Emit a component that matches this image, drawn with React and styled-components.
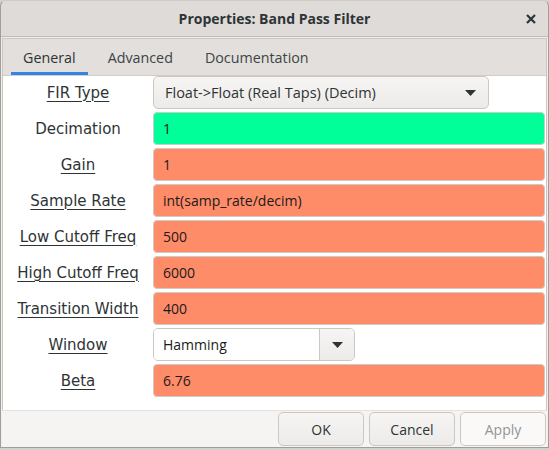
import { Fragment } from "react";
import styled, { createGlobalStyle } from "styled-components";

const GlobalStyle = createGlobalStyle`
  html, body {
    margin: 0;
    padding: 0;
    background: #d3d1ce;
  }
  body {
    font-family: "Open Sans", "Noto Sans", sans-serif;
    color: #2e3436;
  }
`;

const Window = styled.div`
  width: 549px;
  height: 448px;
  box-sizing: border-box;
  display: flex;
  flex-direction: column;
  background: #dedbd8;
  border: 1px solid #a19e9a;
  border-top-color: #cfccc8;
  border-radius: 6px 6px 0 0;
  overflow: hidden;
`;

const TitleBar = styled.div`
  height: 35px;
  flex: none;
  display: grid;
  grid-template-columns: 1fr auto 1fr;
  align-items: center;
  border-bottom: 1px solid #bfbcb8;
`;

const Title = styled.div`
  grid-column: 2;
  font-weight: bold;
  font-size: 14px;
  color: #2e3436;
`;

const CloseButton = styled.div`
  justify-self: end;
  margin-right: 11px;
  width: 12px;
  height: 12px;
  display: flex;
  align-items: center;
  justify-content: center;
`;

const Body = styled.div`
  flex: 1;
  display: flex;
  flex-direction: column;
  padding: 1px 1px 0 1px;
  background: #f0efed;
`;

const Notebook = styled.div`
  display: flex;
  flex-direction: column;
  border: 1px solid #cdc7c2;
  border-bottom: none;
  background: #ffffff;
`;

const TabBar = styled.div`
  height: 36px;
  display: flex;
  align-items: stretch;
  gap: 8px;
  padding-left: 8px;
  background: #e2dfdc;
  border-bottom: 1px solid #d0cdc9;
`;

const Tab = styled.div`
  display: flex;
  align-items: center;
  padding: 1px 12px 0;
  font-size: 14.3px;
  color: ${(p) => (p.$active ? "#2e3436" : "#3d4446")};
  box-shadow: ${(p) => (p.$active ? "inset 0 -3px 0 #3584e4" : "none")};
`;

const Form = styled.div`
  display: grid;
  grid-template-columns: 150px 1fr;
  grid-auto-rows: 33px;
  row-gap: 3px;
  padding: 0 1px 13px 0;
`;

const Label = styled.div`
  display: flex;
  align-items: center;
  justify-content: center;
  font-family: "DejaVu Sans", sans-serif;
  font-size: 15px;
  color: #2e3436;
  span {
    text-decoration: ${(p) => (p.$underline ? "underline" : "none")};
    text-underline-offset: 3px;
    text-decoration-thickness: 1px;
  }
`;

const Entry = styled.div`
  box-sizing: border-box;
  display: flex;
  align-items: center;
  padding: 0 9px;
  font-size: 14px;
  color: #1a1a1a;
  background: ${(p) => p.$bg};
  border: 1px solid #cfcac5;
  border-radius: 4px;
`;

const Combo = styled.div`
  box-sizing: border-box;
  width: ${(p) => p.$width}px;
  display: flex;
  align-items: center;
  justify-content: space-between;
  padding: 0 12px 0 11px;
  font-size: 14.5px;
  color: #2e3436;
  background: linear-gradient(to bottom, #f6f5f4, #edebe9);
  border: 1px solid #cdc7c2;
  border-radius: 5px;
`;

const ComboEntry = styled.div`
  box-sizing: border-box;
  width: ${(p) => p.$width}px;
  display: flex;
  border: 1px solid #cdc7c2;
  border-radius: 5px;
  overflow: hidden;
`;

const ComboText = styled.div`
  flex: 1;
  display: flex;
  align-items: center;
  padding: 0 9px;
  font-size: 14px;
  color: #1a1a1a;
  background: #ffffff;
  border-right: 1px solid #cdc7c2;
`;

const ComboButton = styled.div`
  width: 34px;
  display: flex;
  align-items: center;
  justify-content: center;
  background: linear-gradient(to bottom, #f6f5f4, #edebe9);
`;

const ActionBar = styled.div`
  flex: 1;
  display: flex;
  justify-content: flex-end;
  align-items: flex-start;
  gap: 5px;
  padding: 1px 1px 0 0;
  background: #f5f4f2;
  border-top: 1px solid #e4e1de;
`;

const Button = styled.button`
  box-sizing: border-box;
  width: 86px;
  height: 34px;
  font-family: inherit;
  font-size: 14px;
  color: ${(p) => (p.disabled ? "#929595" : "#2e3436")};
  background: ${(p) =>
    p.disabled ? "#faf9f8" : "linear-gradient(to bottom, #f6f5f4, #edebe9)"};
  border: 1px solid #cdc7c2;
  border-radius: 5px;
  padding: 1px 0 0;
`;

const Arrow = () => (
  <svg width="11" height="6" viewBox="0 0 11 6">
    <path d="M0 0 L11 0 L5.5 6 Z" fill="#2e3436" />
  </svg>
);

const SALMON = "#ff8c69";
const GREEN = "#00ff99";

const fields = [
  { label: "Decimation", value: "1", bg: GREEN, underline: false },
  { label: "Gain", value: "1", bg: SALMON, underline: true },
  { label: "Sample Rate", value: "int(samp_rate/decim)", bg: SALMON, underline: true },
  { label: "Low Cutoff Freq", value: "500", bg: SALMON, underline: true },
  { label: "High Cutoff Freq", value: "6000", bg: SALMON, underline: true },
  { label: "Transition Width", value: "400", bg: SALMON, underline: true },
];

export default function App() {
  return (
    <>
      <GlobalStyle />
      <Window>
        <TitleBar>
          <Title>Properties: Band Pass Filter</Title>
          <CloseButton>
            <svg width="10" height="10" viewBox="0 0 10 10">
              <path d="M1 1 L9 9 M9 1 L1 9" stroke="#2e3436" strokeWidth="2.2" />
            </svg>
          </CloseButton>
        </TitleBar>
        <Body>
          <Notebook>
            <TabBar>
              <Tab $active>General</Tab>
              <Tab>Advanced</Tab>
              <Tab>Documentation</Tab>
            </TabBar>
            <Form>
              <Label $underline>
                <span>FIR Type</span>
              </Label>
              <Combo $width={336}>
                <span>Float-&gt;Float (Real Taps) (Decim)</span>
                <Arrow />
              </Combo>
              {fields.map((f) => (
                <Fragment key={f.label}>
                  <Label $underline={f.underline}>
                    <span>{f.label}</span>
                  </Label>
                  <Entry $bg={f.bg}>{f.value}</Entry>
                </Fragment>
              ))}
              <Label $underline>
                <span>Window</span>
              </Label>
              <ComboEntry $width={202}>
                <ComboText>Hamming</ComboText>
                <ComboButton>
                  <Arrow />
                </ComboButton>
              </ComboEntry>
              <Label $underline>
                <span>Beta</span>
              </Label>
              <Entry $bg={SALMON}>6.76</Entry>
            </Form>
          </Notebook>
          <ActionBar>
            <Button>OK</Button>
            <Button>Cancel</Button>
            <Button disabled>Apply</Button>
          </ActionBar>
        </Body>
      </Window>
    </>
  );
}
